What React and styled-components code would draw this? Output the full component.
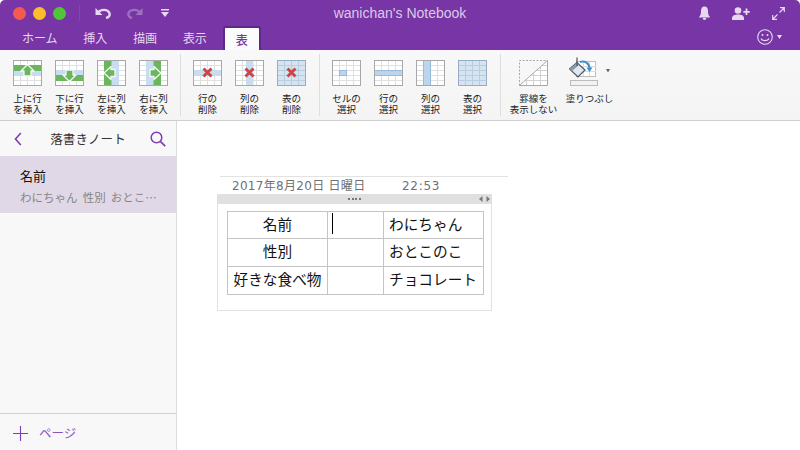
import React from "react";
import styled, { createGlobalStyle } from "styled-components";

const JP = `"Noto Sans CJK JP", "Liberation Sans", sans-serif`;

const GlobalStyle = createGlobalStyle`
  html, body { margin: 0; padding: 0; background: #fff; overflow: hidden; }
  body { font-family: ${JP}; }
`;

const Window = styled.div`
  width: 800px;
  height: 450px;
  display: flex;
  flex-direction: column;
  overflow: hidden;
  border-radius: 5px 5px 0 0;
`;

const TitleBar = styled.header`
  height: 50px;
  background: #7735a5;
  flex: none;
`;

const TopRow = styled.div`
  height: 26px;
  display: grid;
  grid-template-columns: 1fr auto 1fr;
  align-items: center;
`;

const TopLeft = styled.div`
  display: flex;
  align-items: center;
  padding-left: 13px;
`;

const Light = styled.span`
  width: 13px;
  height: 13px;
  border-radius: 50%;
  margin-right: 7px;
  background: ${p => p.$color};
`;

const Divider = styled.span`
  width: 1px;
  height: 16px;
  margin: 0 15px 0 6px;
  background: #8446b0;
`;

const QuickIcon = styled.svg`
  display: block;
  margin-right: ${p => p.$gap || 0}px;
  opacity: ${p => p.$dim ? 0.35 : 1};
`;

const Title = styled.div`
  font-family: "Liberation Sans", sans-serif;
  font-size: 14px;
  color: #dcc9e9;
`;

const TopRight = styled.div`
  display: flex;
  justify-content: flex-end;
  align-items: center;
  gap: 22px;
  padding-right: 15px;
`;

const TabRow = styled.div`
  height: 24px;
  display: flex;
  align-items: stretch;
  padding-left: 9px;
  position: relative;
`;

const Tab = styled.div`
  font-size: 12px;
  line-height: 24px;
  padding: 0 13px;
  color: #e6d8ef;
  letter-spacing: -0.1px;
`;

const ActiveTab = styled(Tab)`
  margin-left: 3px;
  padding: 0 11px;
  line-height: 23px;
  font-weight: 500;
  color: #7735a5;
  background: #fbfbfb;
  border: 2px solid #5f2a87;
  border-bottom: 0;
  border-radius: 3px 3px 0 0;
`;

const SmileBox = styled.div`
  margin-left: auto;
  display: flex;
  align-items: center;
  gap: 4px;
  padding: 0 18px 2px 0;
`;

const Ribbon = styled.section`
  height: 71px;
  box-sizing: border-box;
  flex: none;
  display: flex;
  background: linear-gradient(#f8f8f8, #f4f4f4);
  border-bottom: 1px solid #cecece;
`;

const Group = styled.div`
  display: flex;
  gap: 1px;
  margin: 4px 0 4px;
  padding: 6px ${p => p.$right}px 0 6px;
  border-right: ${p => p.$last ? "none" : "1px solid #dedede"};
  box-sizing: border-box;
  height: 62px;
`;

const FirstGroup = styled(Group)`
  padding-left: 7px;
`;

const RibbonButton = styled.div`
  width: ${p => p.$width || 41}px;
  display: flex;
  flex-direction: column;
  align-items: center;
  flex: none;
`;

const IconSlot = styled.div`
  height: 26px;
  display: flex;
  align-items: flex-end;
  svg { display: block; flex: none; }
`;

const Label = styled.div`
  margin-top: 7px;
  font-size: 9.5px;
  line-height: 11px;
  color: #222;
  text-align: center;
  white-space: nowrap;
`;

const Main = styled.div`
  flex: 1;
  display: flex;
  min-height: 0;
`;

const Sidebar = styled.aside`
  width: 176px;
  flex: none;
  display: flex;
  flex-direction: column;
  background: #f8f8f8;
  border-right: 1px solid #dcdcdc;
`;

const SideHead = styled.div`
  height: 35px;
  flex: none;
  display: flex;
  align-items: center;
  padding: 0 10px 0 14px;
  box-shadow: 0 1px 1px rgba(0, 0, 0, 0.04);
`;

const SideTitle = styled.div`
  flex: 1;
  text-align: center;
  font-size: 12.5px;
  color: #333;
  letter-spacing: 0.1px;
  padding-left: 4px;
`;

const PageItem = styled.div`
  height: 57px;
  flex: none;
  box-sizing: border-box;
  padding: 10px 0 0 20px;
  background: #e0d8e6;
`;

const PageName = styled.div`
  font-size: 13px;
  line-height: 19px;
  color: #111;
`;

const PagePreview = styled.div`
  margin-top: 2px;
  font-size: 11.5px;
  line-height: 20px;
  color: #858585;
  white-space: pre;
`;

const SideFoot = styled.div`
  margin-top: auto;
  height: 37px;
  box-sizing: border-box;
  flex: none;
  display: flex;
  align-items: center;
  gap: 11px;
  padding: 0 0 0 13px;
  border-top: 1px solid #d2d2d2;
  color: #8b4fc1;
  font-size: 12.5px;
  svg { margin-top: 2px; }
`;

const Canvas = styled.main`
  flex: 1;
  position: relative;
  background: #fff;
`;

const DateBlock = styled.div`
  position: absolute;
  left: 43px;
  top: 55px;
  width: 288px;
  height: 18px;
  border-top: 1px solid #e2e2e2;
  display: flex;
  padding-left: 12px;
  box-sizing: border-box;
  font-family: "DejaVu Sans", ${JP};
  font-size: 12px;
  line-height: 19px;
  color: #717171;
  letter-spacing: 0.3px;
`;

const DateText = styled.span`
  width: 170px;
  white-space: nowrap;
`;

const TimeText = styled.span`
  letter-spacing: 0.7px;
`;

const Note = styled.div`
  position: absolute;
  left: 40px;
  top: 73px;
  width: 275px;
  height: 117px;
  box-sizing: border-box;
  border: 1px solid #e2e2e2;
  border-top: 0;
`;

const NoteBar = styled.div`
  height: 10px;
  margin: 0 -1px;
  background: #e0e0e0;
  display: flex;
  align-items: center;
  justify-content: center;
  position: relative;
`;

const Dots = styled.span`
  width: 13px;
  height: 2px;
  background: repeating-linear-gradient(90deg, #777 0 2px, transparent 2px 3.6px);
`;

const BarArrows = styled.svg`
  position: absolute;
  right: 2px;
  top: 2px;
`;

const Table = styled.table`
  border-collapse: collapse;
  margin: 7px 0 0 9px;
  table-layout: fixed;
  width: 256px;
  font-size: 14.67px;
  color: #111;
`;

const Cell = styled.td`
  border: 1px solid #c4c4c4;
  padding: 0 0 3px ${p => p.$pad || 0}px;
  height: ${p => p.$h}px;
  box-sizing: border-box;
  text-align: ${p => p.$center ? "center" : "left"};
  white-space: nowrap;
  line-height: 20px;
  overflow: hidden;
`;

const Caret = styled.span`
  display: block;
  width: 1px;
  height: 21px;
  background: #000;
`;

const BLUE = "#c9ddf0";
const GREEN = "#69b65c";

const GridLines = ({ line = "#e0e0e0" }) => (
  <g stroke={line} strokeWidth="1" fill="none">
    <path d="M7.5 1v24M14.5 1v24M21.5 1v24M1 5.5h27M1 10.5h27M1 15.5h27M1 20.5h27" />
  </g>
);

const Frame = ({ fill = "#fff", line, edge = "#a8a8a8", children }) => (
  <svg width="29" height="26" viewBox="0 0 29 26">
    <rect x="0.5" y="0.5" width="28" height="25" fill={fill} />
    <GridLines line={line} />
    {children}
    <rect x="0.5" y="0.5" width="28" height="25" fill="none" stroke={edge} />
  </svg>
);

const Arrow = ({ points }) => (
  <polygon points={points} fill={GREEN} stroke="#f6fbf4" strokeWidth="1.3" strokeLinejoin="round" />
);

const Cross = () => (
  <path d="M10.5 8.5l8 8M18.5 8.5l-8 8" stroke="#c9474b" strokeWidth="3" fill="none" />
);

const icons = {
  rowAbove: (
    <Frame>
      <rect x="1" y="11" width="27" height="5" fill={BLUE} />
      <rect x="1" y="5" width="27" height="6" fill={GREEN} />
      <Arrow points="14.5,4.5 21,11 18,11 18,16 11,16 11,11 8,11" />
    </Frame>
  ),
  rowBelow: (
    <Frame>
      <rect x="1" y="10" width="27" height="5" fill={BLUE} />
      <rect x="1" y="15" width="27" height="6" fill={GREEN} />
      <Arrow points="14.5,21.5 21,15 18,15 18,10 11,10 11,15 8,15" />
    </Frame>
  ),
  colLeft: (
    <Frame>
      <rect x="14.5" y="1" width="7.5" height="24" fill={BLUE} />
      <rect x="7" y="1" width="7.5" height="24" fill={GREEN} />
      <Arrow points="7,13 14,6.5 14,9.5 18,9.5 18,16.5 14,16.5 14,19.5" />
    </Frame>
  ),
  colRight: (
    <Frame>
      <rect x="7" y="1" width="7.5" height="24" fill={BLUE} />
      <rect x="14.5" y="1" width="7.5" height="24" fill={GREEN} />
      <Arrow points="22,13 15,6.5 15,9.5 11,9.5 11,16.5 15,16.5 15,19.5" />
    </Frame>
  ),
  delRow: (
    <Frame>
      <rect x="1" y="10" width="27" height="6" fill={BLUE} />
      <Cross />
    </Frame>
  ),
  delCol: (
    <Frame>
      <rect x="11" y="1" width="7.5" height="24" fill={BLUE} />
      <Cross />
    </Frame>
  ),
  delTable: (
    <Frame fill="#d6e4f2" line="#b9cde0" edge="#98adc4">
      <Cross />
    </Frame>
  ),
  selCell: (
    <Frame>
      <rect x="7.5" y="10.5" width="7" height="5" fill="#bcd4ec" stroke="#98bbdc" />
    </Frame>
  ),
  selRow: (
    <Frame>
      <rect x="0.5" y="10.5" width="28" height="5" fill="#bcd4ec" stroke="#98bbdc" />
    </Frame>
  ),
  selCol: (
    <Frame>
      <rect x="7.5" y="0.5" width="7" height="25" fill="#bcd4ec" stroke="#98bbdc" />
    </Frame>
  ),
  selTable: <Frame fill="#d6e4f2" line="#b9cde0" edge="#98adc4" />,
  noBorder: (
    <svg width="29" height="26" viewBox="0 0 29 26">
      <defs>
        <clipPath id="tri">
          <polygon points="0,26 29,0 29,26" />
        </clipPath>
      </defs>
      <path d="M0.5 25.5V0.5H28.5" fill="none" stroke="#a8a8a8" strokeDasharray="2 1.5" />
      <polygon points="1,25 28,1 28,25" fill="#fff" />
      <g clipPath="url(#tri)">
        <GridLines line="#d2d2d2" />
      </g>
      <path d="M0.5 25.5L28.5 0.5V25.5Z" fill="none" stroke="#a8a8a8" />
    </svg>
  ),
  fill: (
    <svg width="41" height="29" viewBox="0 0 41 29">
      <rect x="7.5" y="4.5" width="19" height="15" fill="#fff" stroke="#bdbdbd" />
      <path d="M13 9.5h14M13 14.5h14M14.5 5v14M20.5 5v14" stroke="#dcdcdc" fill="none" />
      <rect x="1.5" y="23.5" width="27" height="5" fill="#f2f2f2" stroke="#bcbcbc" />
      <polygon points="0.5,12 8,5.5 16,13 9,20" fill="#dfe8ef" stroke="#4d5661" strokeWidth="1.2" />
      <polygon points="0.5,12 8,5.5 10,8 3,14" fill="#8c99a6" />
      <path d="M8 0.5V9" stroke="#4d5661" strokeWidth="1.2" fill="none" />
      <path d="M11 5c5-1.5 9 1 9.5 6" stroke="#3f8fd0" strokeWidth="2" fill="none" />
      <polygon points="17.5,10.5 23.5,10.5 20.5,15" fill="#3f8fd0" />
      <polygon points="37,12 41,12 39,15.5" fill="#666" />
    </svg>
  )
};

const groups = [
  {
    right: 6,
    items: [
      ["rowAbove", "上に行", "を挿入"],
      ["rowBelow", "下に行", "を挿入"],
      ["colLeft", "左に列", "を挿入"],
      ["colRight", "右に列", "を挿入"]
    ]
  },
  {
    right: 7,
    items: [
      ["delRow", "行の", "削除"],
      ["delCol", "列の", "削除"],
      ["delTable", "表の", "削除"]
    ]
  },
  {
    right: 7,
    items: [
      ["selCell", "セルの", "選択"],
      ["selRow", "行の", "選択"],
      ["selCol", "列の", "選択"],
      ["selTable", "表の", "選択"]
    ]
  }
];

const rows = [
  { h: 27, cells: ["名前", "わにちゃん"], caret: true },
  { h: 28, cells: ["性別", "おとこのこ"] },
  { h: 28, cells: ["好きな食べ物", "チョコレート"] }
];

const ToolButton = ({ icon, lines, width }) => (
  <RibbonButton $width={width}>
    <IconSlot>{icons[icon]}</IconSlot>
    <Label>
      {lines[0]}
      {lines[1] && <br />}
      {lines[1]}
    </Label>
  </RibbonButton>
);

const App = () => {
  return (
    <Window>
      <GlobalStyle />
      <TitleBar>
        <TopRow>
          <TopLeft>
            <Light $color="#f45b50" />
            <Light $color="#fbbd2e" />
            <Light $color="#52c43a" />
            <Divider />
            <QuickIcon width="16" height="12" viewBox="0 0 16 12" $gap={16}>
              <polygon points="0.5,1 0.5,8 7.5,8" fill="#e6d8ef" />
              <path d="M3 5.5C6 2 12.5 2 14.3 5.8C15.5 8.5 13.5 10.5 11 11" stroke="#e6d8ef" strokeWidth="2.4" fill="none" />
            </QuickIcon>
            <QuickIcon width="16" height="12" viewBox="0 0 16 12" $gap={18} $dim>
              <polygon points="15.5,1 15.5,8 8.5,8" fill="#e6d8ef" />
              <path d="M13 5.5C10 2 3.5 2 1.7 5.8C0.5 8.5 2.5 10.5 5 11" stroke="#e6d8ef" strokeWidth="2.4" fill="none" />
            </QuickIcon>
            <QuickIcon width="8" height="8" viewBox="0 0 8 8">
              <path d="M0 0.75h8" stroke="#e6d8ef" strokeWidth="1.5" />
              <polygon points="0,3 8,3 4,8" fill="#e6d8ef" />
            </QuickIcon>
          </TopLeft>
          <Title>wanichan's Notebook</Title>
          <TopRight>
            <svg width="11" height="14" viewBox="0 0 11 14">
              <path d="M5.5 0.5C3 0.5 2 2.5 2 5C2 8 1.5 9.5 0.2 10.8V11.5H10.8V10.8C9.5 9.5 9 8 9 5C9 2.5 8 0.5 5.5 0.5Z" fill="#e6d8ef" />
              <ellipse cx="5.5" cy="12.8" rx="1.8" ry="1.1" fill="#e6d8ef" />
            </svg>
            <svg width="18" height="13" viewBox="0 0 18 13">
              <circle cx="6" cy="3.5" r="3.3" fill="#e6d8ef" />
              <path d="M0 13V11C0 8.5 3 7.5 6 7.5C9 7.5 12 8.5 12 11V13Z" fill="#e6d8ef" />
              <path d="M14.5 1.5V8M11.3 4.8H17.8" stroke="#e6d8ef" strokeWidth="1.8" />
            </svg>
            <svg width="13" height="13" viewBox="0 0 13 13">
              <path d="M8 0.7H12.3V5M12 1L7.5 5.5M5 12.3H0.7V8M1 12L5.5 7.5" stroke="#e6d8ef" strokeWidth="1.2" fill="none" />
            </svg>
          </TopRight>
        </TopRow>
        <TabRow>
          <Tab>ホーム</Tab>
          <Tab>挿入</Tab>
          <Tab>描画</Tab>
          <Tab>表示</Tab>
          <ActiveTab>表</ActiveTab>
          <SmileBox>
            <svg width="16" height="16" viewBox="0 0 16 16">
              <circle cx="8" cy="8" r="7.3" fill="none" stroke="#e6d8ef" strokeWidth="1.1" />
              <circle cx="5.5" cy="6" r="1" fill="#e6d8ef" />
              <circle cx="10.5" cy="6" r="1" fill="#e6d8ef" />
              <path d="M4 9.5C5 12.3 11 12.3 12 9.5" stroke="#e6d8ef" strokeWidth="1.1" fill="none" />
            </svg>
            <svg width="5" height="4" viewBox="0 0 5 4">
              <polygon points="0,0 5,0 2.5,4" fill="#e6d8ef" />
            </svg>
          </SmileBox>
        </TabRow>
      </TitleBar>

      <Ribbon>
        {groups.map((group, i) => {
          const Wrap = i === 0 ? FirstGroup : Group;
          return (
            <Wrap key={i} $right={group.right}>
              {group.items.map(item => (
                <ToolButton key={item[0]} icon={item[0]} lines={[item[1], item[2]]} />
              ))}
            </Wrap>
          );
        })}
        <Group $right={0} $last>
          <ToolButton icon="noBorder" lines={["罫線を", "表示しない"]} width={53} />
          <ToolButton icon="fill" lines={["塗りつぶし"]} width={57} />
        </Group>
      </Ribbon>

      <Main>
        <Sidebar>
          <SideHead>
            <svg width="8" height="14" viewBox="0 0 8 14">
              <path d="M6.8 1L1.5 7L6.8 13" stroke="#7a3fb0" strokeWidth="1.6" fill="none" />
            </svg>
            <SideTitle>落書きノート</SideTitle>
            <svg width="16" height="16" viewBox="0 0 16 16">
              <circle cx="6.5" cy="6.5" r="5.3" fill="none" stroke="#7a3fb0" strokeWidth="1.5" />
              <path d="M10.3 10.3L15.2 15.2" stroke="#7a3fb0" strokeWidth="1.7" />
            </svg>
          </SideHead>
          <PageItem>
            <PageName>名前</PageName>
            <PagePreview>{"わにちゃん  性別  おとこ…"}</PagePreview>
          </PageItem>
          <SideFoot>
            <svg width="15" height="15" viewBox="0 0 15 15">
              <path d="M7.5 0V15M0 7.5H15" stroke="#7a3fb0" strokeWidth="1.1" />
            </svg>
            ページ
          </SideFoot>
        </Sidebar>

        <Canvas>
          <DateBlock>
            <DateText>2017年8月20日 日曜日</DateText>
            <TimeText>22:53</TimeText>
          </DateBlock>
          <Note>
            <NoteBar>
              <Dots />
              <BarArrows width="11" height="6" viewBox="0 0 11 6">
                <polygon points="3.5,0 3.5,6 0,3" fill="#777" />
                <polygon points="7.5,0 7.5,6 11,3" fill="#777" />
              </BarArrows>
            </NoteBar>
            <Table>
              <colgroup>
                <col width="100" />
                <col width="56" />
                <col width="100" />
              </colgroup>
              <tbody>
                {rows.map(row => (
                  <tr key={row.cells[0]}>
                    <Cell $h={row.h} $center>{row.cells[0]}</Cell>
                    <Cell $h={row.h} $pad={4}>{row.caret && <Caret />}</Cell>
                    <Cell $h={row.h} $pad={5}>{row.cells[1]}</Cell>
                  </tr>
                ))}
              </tbody>
            </Table>
          </Note>
        </Canvas>
      </Main>
    </Window>
  );
};

export default App;
